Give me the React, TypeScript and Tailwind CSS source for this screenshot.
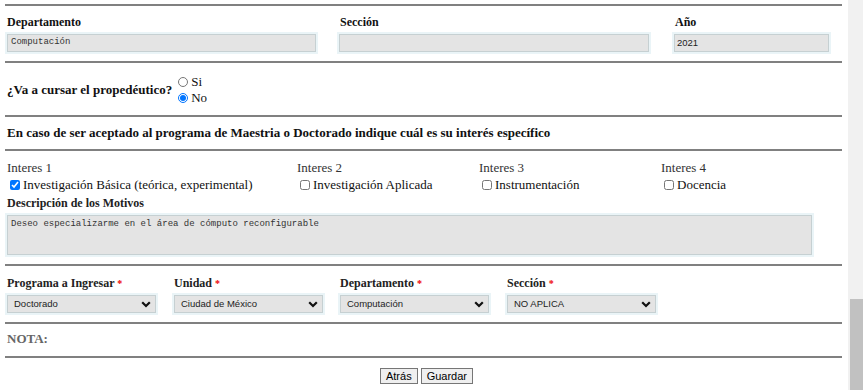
import React from "react";

function Rule() {
  return <div className="h-[2px] bg-[#808080]" />;
}

function Halo({ className = "", children }: { className?: string; children?: React.ReactNode }) {
  return (
    <div className={`border-2 border-[#eaf4f7] ${className}`}>
      <div className="flex h-full items-center border border-[#c6d0d2] bg-[#e4e4e4]">{children}</div>
    </div>
  );
}

function Chevron() {
  return (
    <svg width="10" height="7" viewBox="0 0 10 7" className="shrink-0">
      <path d="M1.2 1.2 L5 5 L8.8 1.2" fill="none" stroke="#111" strokeWidth="2.2" />
    </svg>
  );
}

function SelectBox({ value }: { value: string }) {
  return (
    <Halo className="h-[22px] w-[153px]">
      <div className="flex w-full items-center justify-between pl-[6px] pr-[4px] font-['Liberation_Sans',Arial,sans-serif] text-[9.5px] text-[#222]">
        <span>{value}</span>
        <Chevron />
      </div>
    </Halo>
  );
}

const interests = [
  { title: "Interes 1", label: "Investigación Básica (teórica, experimental)", checked: true },
  { title: "Interes 2", label: "Investigación Aplicada", checked: false },
  { title: "Interes 3", label: "Instrumentación", checked: false },
  { title: "Interes 4", label: "Docencia", checked: false },
];

const selects = [
  { label: "Programa a Ingresar", value: "Doctorado" },
  { label: "Unidad", value: "Ciudad de México" },
  { label: "Departamento", value: "Computación" },
  { label: "Sección", value: "NO APLICA" },
];

export default function App() {
  return (
    <div className="flex h-[390px] w-[863px] overflow-hidden bg-white font-['Liberation_Serif','Times_New_Roman',serif] text-[#111]">
      <main className="w-[848px] pl-[5px] pr-[6px] pt-[4px]">
        <Rule />
        <div className="grid grid-cols-[332px_335px_1fr] pb-[7px] pt-[9px]">
          <div>
            <p className="pl-[2px] text-[12px] font-bold leading-[14px]">Departamento</p>
            <Halo className="mt-[3px] h-[22px] w-[313px]">
              <span className="pl-[3px] font-['Liberation_Mono',monospace] text-[9px] text-[#333]">Computación</span>
            </Halo>
          </div>
          <div>
            <p className="pl-[3px] text-[12px] font-bold leading-[14px]">Sección</p>
            <Halo className="mt-[3px] h-[22px] w-[314px]" />
          </div>
          <div>
            <p className="pl-[3px] text-[12px] font-bold leading-[14px]">Año</p>
            <Halo className="mt-[3px] h-[22px] w-[159px]">
              <span className="pl-[2px] font-['Liberation_Sans',Arial,sans-serif] text-[9.5px] text-[#222]">2021</span>
            </Halo>
          </div>
        </div>

        <Rule />
        <div className="flex items-center pb-[9px] pt-[11px]">
          <p className="pl-[2px] text-[13px] font-bold leading-[16px]">¿Va a cursar el propedéutico?</p>
          <div className="ml-[6px] flex flex-col font-['Liberation_Serif',serif] text-[13px] leading-[16px]">
            <label className="flex items-center gap-[3px]">
              <input type="radio" name="prop" className="m-0 h-[10px] w-[10px]" />
              <span>Si</span>
            </label>
            <label className="flex items-center gap-[3px]">
              <input type="radio" name="prop" defaultChecked className="m-0 h-[10px] w-[10px]" />
              <span>No</span>
            </label>
          </div>
        </div>

        <Rule />
        <p className="pb-[8px] pl-[2px] pt-[8px] text-[13px] font-bold leading-[16px]">
          En caso de ser aceptado al programa de Maestria o Doctorado indique cuál es su interés específico
        </p>

        <Rule />
        <div className="pb-[7px] pt-[9px]">
          <div className="grid grid-cols-[290px_182px_182px_1fr] pl-[2px] text-[13px]">
            {interests.map((it) => (
              <div key={it.title}>
                <p className="leading-[16px] text-[#333]">{it.title}</p>
                <label className="flex h-[18px] items-center gap-[3px] pl-[3px]">
                  <input type="checkbox" defaultChecked={it.checked} className="m-0 h-[10px] w-[10px]" />
                  <span>{it.label}</span>
                </label>
              </div>
            ))}
          </div>
          <p className="mt-[2px] pl-[2px] text-[12px] font-bold leading-[14px] text-[#222]">Descripción de los Motivos</p>
          <div className="mt-[3px] h-[44px] w-[809px] border-2 border-[#eaf4f7]">
            <div className="h-full border border-[#c6d0d2] bg-[#e4e4e4] px-[3px] pt-[3px] font-['Liberation_Mono',monospace] text-[9px] leading-[11px] text-[#333]">
              Deseo especializarme en el área de cómputo reconfigurable
            </div>
          </div>
        </div>

        <Rule />
        <div className="grid grid-cols-[167px_166px_167px_1fr] pb-[7px] pt-[10px]">
          {selects.map((s) => (
            <div key={s.label}>
              <p className="pl-[2px] text-[12px] font-bold leading-[14px] text-[#222]">
                {s.label} <span className="text-[10px] text-[#e00]">*</span>
              </p>
              <div className="mt-[2px]">
                <SelectBox value={s.value} />
              </div>
            </div>
          ))}
        </div>

        <Rule />
        <p className="pb-[9px] pl-[2px] pt-[7px] text-[13px] font-bold leading-[16px] text-[#666]">NOTA:</p>

        <Rule />
        <div className="flex justify-center gap-[3px] pl-[6px] pt-[10px] font-['Liberation_Sans',Arial,sans-serif] text-[11px] text-black">
          <button className="h-[16px] border border-[#767676] bg-[#efefef] px-[5px] leading-[14px]">Atrás</button>
          <button className="h-[16px] border border-[#767676] bg-[#efefef] px-[5px] leading-[14px]">Guardar</button>
        </div>
      </main>
      <div className="flex w-[15px] flex-col bg-[#f1f1f1] pl-[2px]">
        <div className="mt-[299px] flex-1 bg-[#c1c1c1]" />
      </div>
    </div>
  );
}
